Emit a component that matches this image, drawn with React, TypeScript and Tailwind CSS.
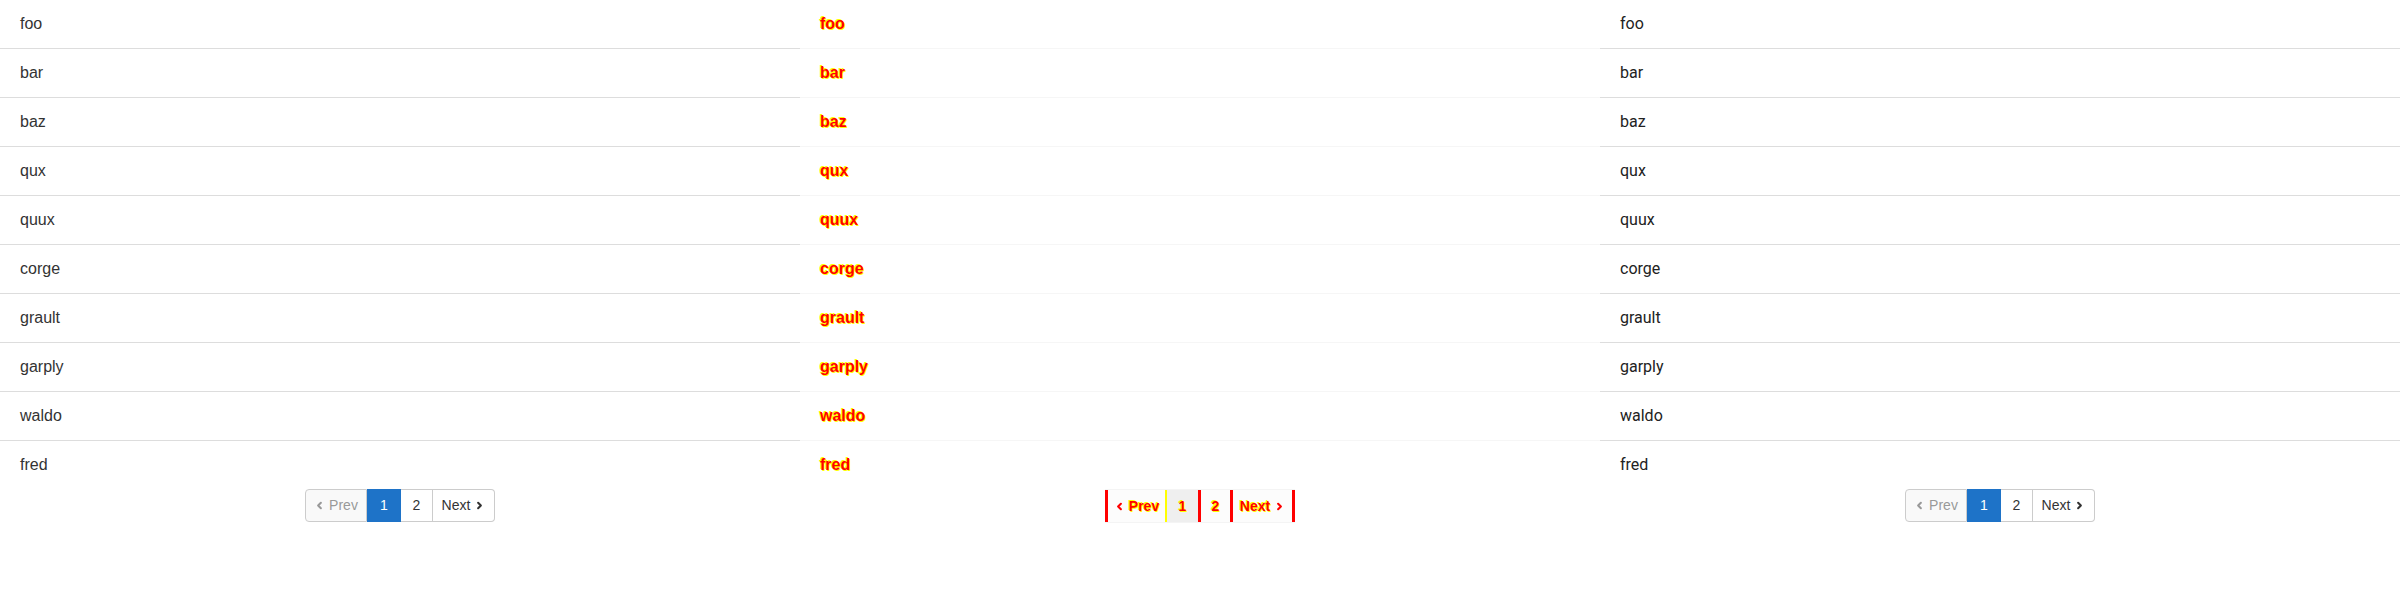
import React from 'react';
import { ChevronLeft, ChevronRight } from 'lucide-react';

const items = ['foo', 'bar', 'baz', 'qux', 'quux', 'corge', 'grault', 'garply', 'waldo', 'fred'];

type Variant = 'left' | 'diff' | 'right';

const glow =
  'text-[#ff0000] font-bold [text-shadow:-1px_-1px_0_#ffff00,1px_1px_0_#ffff00]';

function ItemList({ variant }: { variant: Variant }) {
  const divider =
    variant === 'diff' ? 'divide-[#f6f6f6]' : 'divide-[#dddddd]';
  const text =
    variant === 'left'
      ? 'text-[#333333] font-["Liberation_Sans",Arial,sans-serif]'
      : variant === 'right'
      ? 'text-[#222222] font-["Roboto","Liberation_Sans",sans-serif]'
      : `font-["Liberation_Sans",Arial,sans-serif] ${glow}`;
  return (
    <ul className={`flex flex-col divide-y ${divider}`}>
      {items.map((item) => (
        <li key={item} className={`h-[48px] box-content flex items-center px-5 text-[16px] ${text}`}>
          {item}
        </li>
      ))}
    </ul>
  );
}

function Pager() {
  return (
    <div className="flex justify-center">
      <div className='flex h-[33px] text-[14px] font-["Liberation_Sans",Arial,sans-serif]'>
        <span className="w-[62px] flex items-center justify-center gap-1 border border-[#cccccc] rounded-l bg-[#f9f9f9] text-[#999999]">
          <ChevronLeft size={11} strokeWidth={4.5} />
          Prev
        </span>
        <span className="w-[34px] flex items-center justify-center border border-[#1e73c8] bg-[#1e73c8] text-white">
          1
        </span>
        <span className="w-[32px] flex items-center justify-center border-y border-r border-[#cccccc] bg-white text-[#333333]">
          2
        </span>
        <span className="w-[62px] flex items-center justify-center gap-1 border-y border-r border-[#cccccc] rounded-r bg-white text-[#333333]">
          Next
          <ChevronRight size={11} strokeWidth={4.5} />
        </span>
      </div>
    </div>
  );
}

function DiffPager() {
  return (
    <div className="flex justify-center">
      <div className='flex h-[34px] text-[14px] font-["Liberation_Sans",Arial,sans-serif] bg-[#fcfcfc] border-y border-[#f4f4f4]'>
        <span className={`w-[62px] flex items-center justify-center gap-1 border-l-[3px] border-r-2 border-l-[#ff0000] border-r-[#ffff00] ${glow}`}>
          <ChevronLeft size={11} strokeWidth={4.5} className="text-[#ff0000]" />
          Prev
        </span>
        <span className={`w-[34px] flex items-center justify-center bg-[#efefef] border-r-[3px] border-r-[#ff0000] ${glow}`}>
          1
        </span>
        <span className={`w-[32px] flex items-center justify-center border-r-[3px] border-r-[#ff0000] ${glow}`}>
          2
        </span>
        <span className={`w-[62px] flex items-center justify-center gap-1 border-r-[3px] border-r-[#ff0000] ${glow}`}>
          Next
          <ChevronRight size={11} strokeWidth={4.5} className="text-[#ff0000]" />
        </span>
      </div>
    </div>
  );
}

export default function App() {
  return (
    <div className="w-[2400px] h-[600px] bg-white grid grid-cols-3">
      <div>
        <ItemList variant="left" />
        <Pager />
      </div>
      <div>
        <ItemList variant="diff" />
        <DiffPager />
      </div>
      <div>
        <ItemList variant="right" />
        <Pager />
      </div>
    </div>
  );
}
